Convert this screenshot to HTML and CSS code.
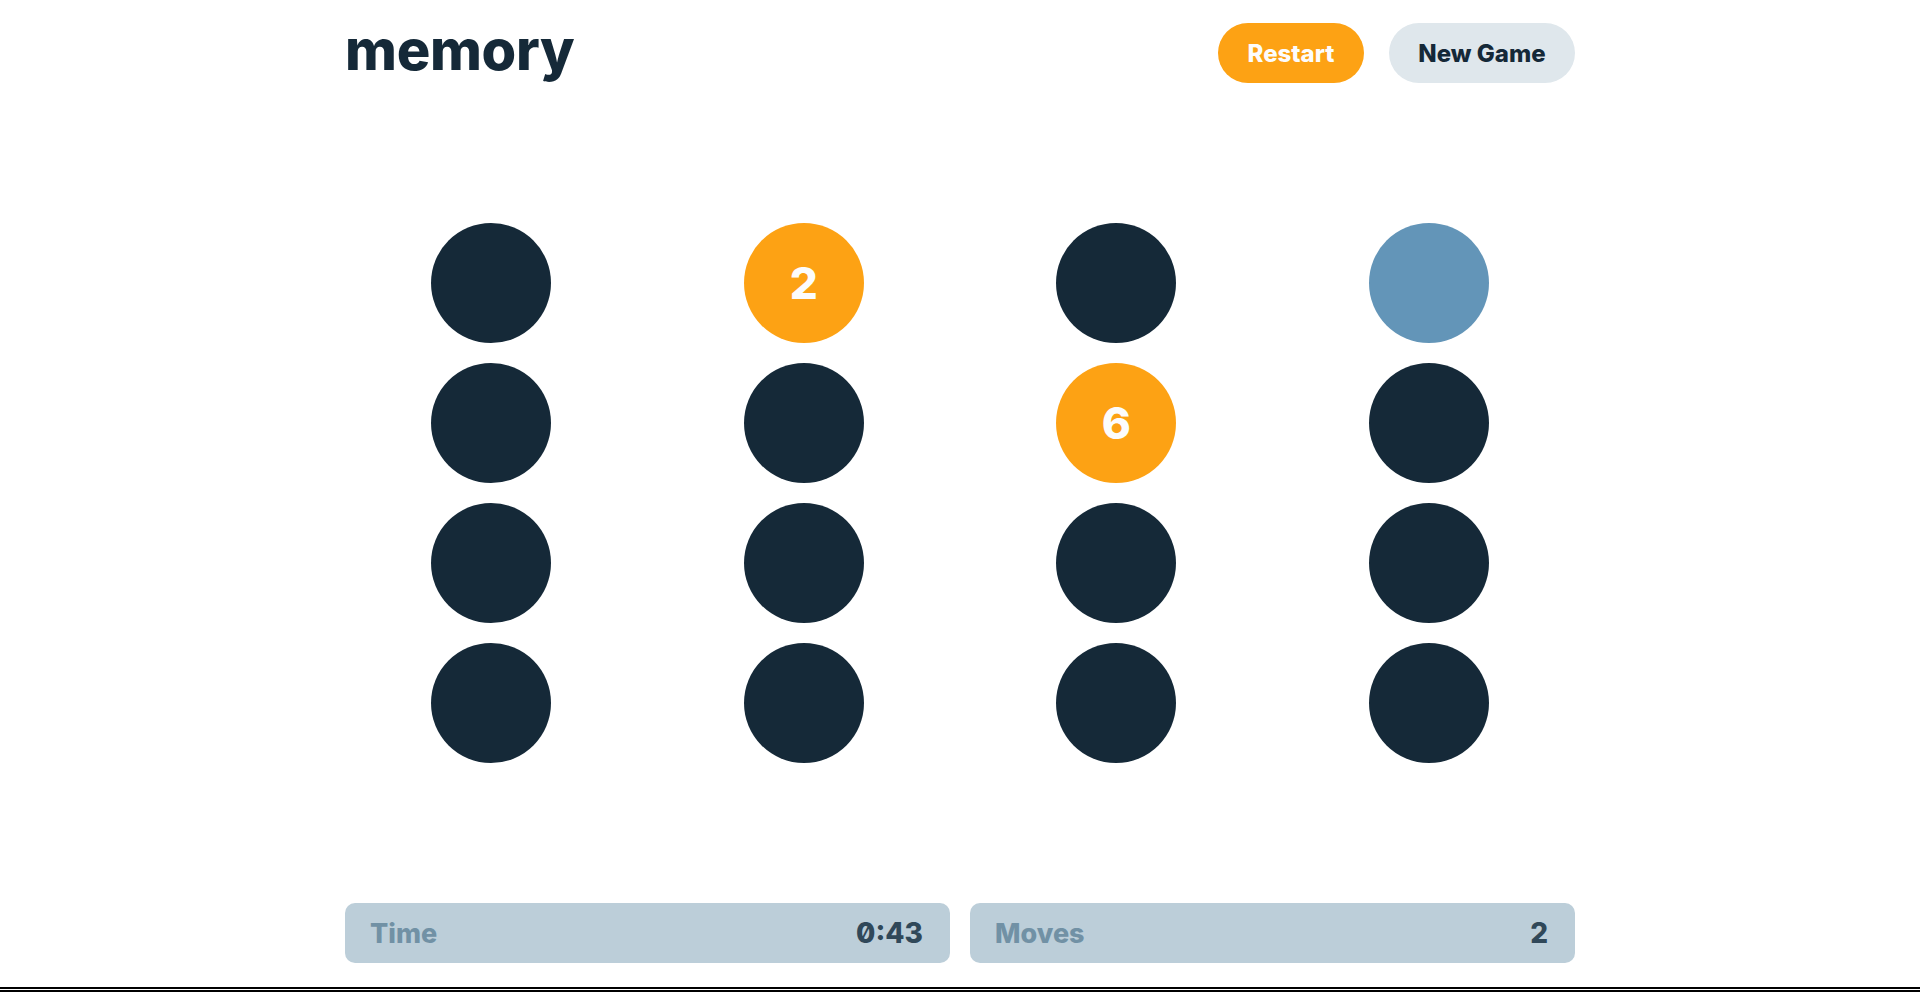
FILE: index.html
```html
<!DOCTYPE html>
<html lang="en">
<head>
<meta charset="utf-8">
<title>memory</title>
<link rel="stylesheet" href="styles.css">
</head>
<body>
<div class="page">
  <header class="header">
    <h1 class="logo">memory</h1>
    <div class="actions">
      <button class="btn btn-primary">Restart</button>
      <button class="btn btn-secondary">New Game</button>
    </div>
  </header>
  <main class="board">
    <div class="cell"><div class="token"></div></div>
    <div class="cell"><div class="token token-open">2</div></div>
    <div class="cell"><div class="token"></div></div>
    <div class="cell"><div class="token token-matched"></div></div>
    <div class="cell"><div class="token"></div></div>
    <div class="cell"><div class="token"></div></div>
    <div class="cell"><div class="token token-open">6</div></div>
    <div class="cell"><div class="token"></div></div>
    <div class="cell"><div class="token"></div></div>
    <div class="cell"><div class="token"></div></div>
    <div class="cell"><div class="token"></div></div>
    <div class="cell"><div class="token"></div></div>
    <div class="cell"><div class="token"></div></div>
    <div class="cell"><div class="token"></div></div>
    <div class="cell"><div class="token"></div></div>
    <div class="cell"><div class="token"></div></div>
  </main>
  <footer class="stats">
    <div class="stat"><span class="stat-label">Time</span><span class="stat-value">0:43</span></div>
    <div class="stat"><span class="stat-label">Moves</span><span class="stat-value">2</span></div>
  </footer>
</div>
<div class="rule"></div>
</body>
</html>
```

FILE: styles.css
```css
html, body {
  margin: 0;
  padding: 0;
  background: #ffffff;
}
body {
  font-family: "Inter", "Liberation Sans", sans-serif;
  color: #152938;
  overflow: hidden;
}
.page {
  width: 1230px;
  margin: 0 auto;
  padding-top: 23px;
}
.header {
  display: flex;
  align-items: center;
  justify-content: space-between;
  height: 60px;
}
.logo {
  margin: 0;
  font-size: 56px;
  font-weight: 800;
  letter-spacing: -0.3px;
  line-height: 1;
  color: #152938;
  position: relative;
  top: -3px;
}
.actions {
  display: flex;
  gap: 25px;
}
.btn {
  box-sizing: border-box;
  height: 60px;
  border: none;
  border-radius: 30px;
  font-family: "Inter", "Liberation Sans", sans-serif;
  font-size: 24px;
  font-weight: 800;
  padding: 0;
  white-space: nowrap;
  cursor: pointer;
}
.btn-primary {
  background: #fda214;
  color: #fcfcfc;
  width: 146px;
}
.btn-secondary {
  background: #dfe7ec;
  color: #152938;
  width: 186px;
}
.board {
  margin-top: 140px;
  display: grid;
  grid-template-columns: repeat(4, 1fr);
  grid-auto-rows: 120px;
  column-gap: 20px;
  row-gap: 20px;
}
.cell {
  display: flex;
  justify-content: center;
}
.token {
  width: 120px;
  height: 120px;
  border-radius: 50%;
  background: #152938;
  display: flex;
  align-items: center;
  justify-content: center;
  color: #fcfcfc;
  font-size: 44px;
  font-weight: 800;
}
.token-open {
  background: #fda214;
}
.token-matched {
  background: #6395b8;
}
.stats {
  margin-top: 140px;
  display: grid;
  grid-template-columns: 1fr 1fr;
  gap: 20px;
}
.stat {
  height: 60px;
  background: #bcced9;
  border-radius: 10px;
  display: flex;
  align-items: center;
  justify-content: space-between;
  padding: 0 27px 0 25px;
}
.stat-label {
  font-size: 27px;
  font-weight: 800;
  color: #7191a5;
}
.stat-value {
  font-size: 28px;
  font-weight: 800;
  color: #304859;
  font-feature-settings: "zero" 1;
}
.rule {
  margin-top: 24px;
  height: 1px;
  border-top: 2px solid #000;
  border-bottom: 2px solid #000;
}
```
